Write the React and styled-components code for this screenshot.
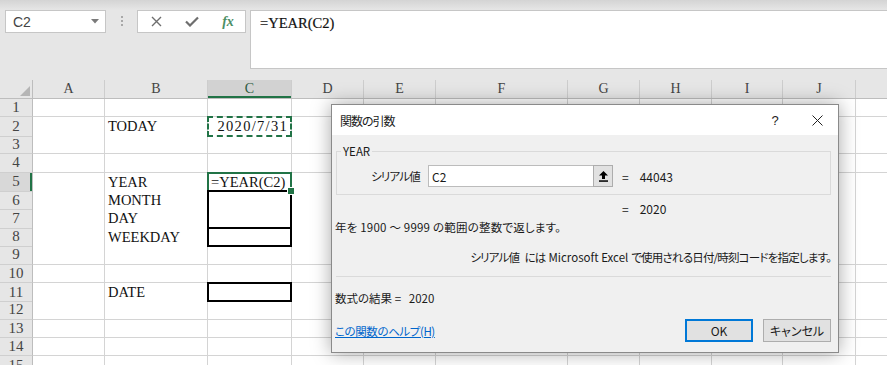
import React from "react";
import styled, { createGlobalStyle, css } from "styled-components";

const GlobalStyle = createGlobalStyle`
  html, body {
    margin: 0;
    padding: 0;
    width: 887px;
    height: 365px;
    overflow: hidden;
    background: #e6e6e6;
  }
  * { box-sizing: border-box; }
`;

const COLS = "33px 72px 103px 84px 72px 72px 132px 72px 72px 71px 73px 72px";
const LETTERS = ["A", "B", "C", "D", "E", "F", "G", "H", "I", "J", ""];
const UI_FONT = `"Noto Sans CJK JP", "Noto Sans", sans-serif`;
const SHEET_FONT = `"Liberation Serif", "Noto Sans CJK JP", serif`;

const Window = styled.div`
  position: relative;
  width: 887px;
  height: 365px;
  overflow: hidden;
  background: #e6e6e6;
`;

const TopStrip = styled.div`
  height: 10px;
  background: linear-gradient(#d4d4d4, #e6e6e6);
`;

const FormulaArea = styled.div`
  display: flex;
  align-items: flex-start;
  height: 70px;
  padding-left: 5px;
`;

const NameBox = styled.div`
  display: flex;
  align-items: center;
  justify-content: space-between;
  width: 101px;
  height: 23px;
  padding: 0 6px 0 7px;
  background: #fff;
  border: 1px solid #c6c6c6;
  font: 14px "Liberation Sans", sans-serif;
  color: #444;
`;

const Grip = styled.div`
  display: flex;
  flex-direction: column;
  gap: 2px;
  margin: 6px 14px 0 15px;
  span {
    width: 2px;
    height: 2px;
    background: #a8a8a8;
  }
`;

const FxButtons = styled.div`
  display: flex;
  width: 109px;
  height: 23px;
  background: #fff;
  border: 1px solid #c6c6c6;
`;

const FxButton = styled.div`
  flex: 0 0 36px;
  display: flex;
  align-items: center;
  justify-content: center;
`;

const FxLabel = styled.span`
  font: italic bold 14px "Liberation Serif", serif;
  color: #4c8f66;
`;

const FormulaInput = styled.div`
  flex: 1;
  height: 59px;
  margin-left: 4px;
  padding: 3px 9px;
  background: #fff;
  border: 1px solid #c6c6c6;
  border-right: none;
  font: 14.5px ${SHEET_FONT};
  line-height: 18px;
  color: #111;
  -webkit-text-stroke: 0.2px #111;
`;

const Sheet = styled.div`
  display: flex;
  flex-direction: column;
`;

const HeaderRow = styled.div`
  display: grid;
  grid-template-columns: ${COLS};
  height: 19px;
  border-bottom: 1px solid #bdbdbd;
`;

const Corner = styled.div`
  position: relative;
  border-right: 1px solid #bdbdbd;
  svg {
    position: absolute;
    right: 2px;
    bottom: 2px;
  }
`;

const ColHead = styled.div`
  display: flex;
  align-items: center;
  justify-content: center;
  border-right: 1px solid #cdcdcd;
  font: 14px ${SHEET_FONT};
  color: #444;
  ${(p) =>
    p.$active &&
    css`
      background: #d2d2d2;
      box-shadow: inset 0 -2px 0 #217346;
      color: #2d5a3f;
    `}
`;

const Row = styled.div`
  display: grid;
  grid-template-columns: ${COLS};
  height: 18.4px;
`;

const RowHead = styled.div`
  display: flex;
  align-items: center;
  justify-content: center;
  border-right: 1px solid #bdbdbd;
  border-bottom: 1px solid #cfcfcf;
  font: 15px ${SHEET_FONT};
  color: #444;
  ${(p) =>
    p.$active &&
    css`
      background: #d8d8d8;
      box-shadow: inset -2px 0 0 #217346;
    `}
`;

const Cell = styled.div`
  position: relative;
  display: flex;
  align-items: center;
  justify-content: ${(p) => (p.$right ? "flex-end" : "flex-start")};
  padding: 0 3px;
  background: #fff;
  border-right: 1px solid #d4d4d4;
  border-bottom: 1px solid #d4d4d4;
  font: 14.5px ${SHEET_FONT};
  line-height: 18.4px;
  color: #111;
  white-space: nowrap;
  letter-spacing: ${(p) => p.$spacing || "0"};

  ${(p) =>
    p.$box &&
    css`
      &::after {
        content: "";
        position: absolute;
        top: -1px;
        left: -1px;
        right: -1px;
        bottom: -1px;
        z-index: 2;
        border-style: ${p.$boxStyle || "solid"};
        border-color: ${p.$boxColor || "#000"};
        border-width: ${p.$box};
        pointer-events: none;
      }
    `}

  ${(p) =>
    p.$handle &&
    css`
      &::before {
        content: "";
        position: absolute;
        right: -4px;
        bottom: -4px;
        width: 6px;
        height: 6px;
        z-index: 3;
        background: #217346;
        border: 1px solid #fff;
      }
    `}
`;

const Dialog = styled.div`
  position: absolute;
  left: 331px;
  top: 104px;
  width: 508px;
  height: 249px;
  display: flex;
  flex-direction: column;
  background: #f0f0f0;
  border: 1px solid #8a8a8a;
  box-shadow: 0 0 18px rgba(0, 0, 0, 0.35);
  font: 11.5px ${UI_FONT};
  font-feature-settings: "palt";
  color: #1a1a1a;
  z-index: 10;
`;

const TitleBar = styled.div`
  display: flex;
  align-items: center;
  height: 30px;
  padding-left: 8px;
  background: #fff;
  font-size: 12px;
`;

const Title = styled.div`
  flex: 1;
  letter-spacing: -1px;
`;

const TitleButton = styled.div`
  display: flex;
  align-items: center;
  justify-content: center;
  width: 42px;
  height: 30px;
  font: 13px "Liberation Sans", sans-serif;
  color: #222;
`;

const Body = styled.div`
  display: flex;
  flex-direction: column;
  padding: 9px 7px 0 3px;
`;

const Group = styled.fieldset`
  margin: 0 0 0 1px;
  padding: 0 0 7px 0;
  border: 1px solid #dadada;
  min-width: 0;
`;

const Legend = styled.legend`
  margin-left: 4px;
  padding: 0 2px;
  line-height: 14px;
`;

const ArgRow = styled.div`
  display: flex;
  align-items: center;
  margin-top: 7px;
`;

const ArgLabel = styled.div`
  width: 83px;
  text-align: right;
  letter-spacing: -0.8px;
`;

const ArgInput = styled.div`
  display: flex;
  align-items: stretch;
  width: 185px;
  height: 22px;
  margin-left: 8px;
  background: #fff;
  border: 1px solid #bcbcbc;
`;

const ArgText = styled.div`
  flex: 1;
  display: flex;
  align-items: center;
  padding-left: 3px;
  font-size: 12px;
`;

const CollapseButton = styled.div`
  display: flex;
  align-items: center;
  justify-content: center;
  width: 20px;
  margin: -1px -1px -1px 0;
  background: #e1e1e1;
  border: 1px solid #adadad;
`;

const Value = styled.div`
  display: flex;
  gap: 11px;
  margin-left: ${(p) => p.$indent || "9px"};
  font-size: 12px;
`;

const Line = styled.div`
  margin-top: ${(p) => p.$top || "0"};
  line-height: 16px;
  text-align: ${(p) => (p.$right ? "right" : "left")};
  letter-spacing: ${(p) => p.$spacing || "0"};
  white-space: nowrap;
`;

const Latin = styled.span`
  letter-spacing: 0;
  margin: 0 3px;
`;

const Separator = styled.div`
  height: 1px;
  margin: 11px 0 0 1px;
  background: #dadada;
`;

const Footer = styled.div`
  display: flex;
  align-items: center;
  gap: 10px;
  margin-top: 13px;
`;

const HelpLink = styled.a`
  flex: 1;
  color: #0066cc;
  text-decoration: underline;
  letter-spacing: -0.4px;
`;

const Button = styled.div`
  display: flex;
  align-items: center;
  justify-content: center;
  width: 68px;
  height: 23px;
  background: #e1e1e1;
  border: ${(p) => (p.$primary ? "2px solid #0078d7" : "1px solid #adadad")};
  font-size: 12px;
`;

const rows = [
  { n: 1 },
  { n: 2, b: "TODAY", c: "2020/7/31", cProps: { $right: true, $spacing: "1.3px", $box: "2px", $boxStyle: "dashed", $boxColor: "#217346" } },
  { n: 3 },
  { n: 4 },
  { n: 5, b: "YEAR", c: "=YEAR(C2)", active: true, cProps: { $box: "2px", $boxColor: "#217346", $handle: true } },
  { n: 6, b: "MONTH", cProps: { $box: "2px 2px 0 2px" } },
  { n: 7, b: "DAY", cProps: { $box: "0 2px 2px 2px" } },
  { n: 8, b: "WEEKDAY", cProps: { $box: "2px" } },
  { n: 9 },
  { n: 10 },
  { n: 11, b: "DATE", cProps: { $box: "2px" } },
  { n: 12 },
  { n: 13 },
  { n: 14 },
  { n: 15 },
];

export default function App() {
  return (
    <Window>
      <GlobalStyle />
      <TopStrip />
      <FormulaArea>
        <NameBox>
          C2
          <svg width="8" height="5" viewBox="0 0 8 5">
            <polygon points="0,0 8,0 4,4.5" fill="#7a7a7a" />
          </svg>
        </NameBox>
        <Grip>
          <span />
          <span />
          <span />
        </Grip>
        <FxButtons>
          <FxButton>
            <svg width="11" height="11" viewBox="0 0 11 11">
              <path d="M1 1 L10 10 M10 1 L1 10" stroke="#6e6e6e" strokeWidth="1.4" />
            </svg>
          </FxButton>
          <FxButton>
            <svg width="14" height="11" viewBox="0 0 14 11">
              <path d="M1 5.5 L5 9.5 L13 1.5" stroke="#6e6e6e" strokeWidth="2.2" fill="none" />
            </svg>
          </FxButton>
          <FxButton>
            <FxLabel>fx</FxLabel>
          </FxButton>
        </FxButtons>
        <FormulaInput>=YEAR(C2)</FormulaInput>
      </FormulaArea>

      <Sheet>
        <HeaderRow>
          <Corner>
            <svg width="10" height="10" viewBox="0 0 10 10">
              <polygon points="10,0 10,10 0,10" fill="#b5b5b5" />
            </svg>
          </Corner>
          {LETTERS.map((l, i) => (
            <ColHead key={i} $active={l === "C"}>
              {l}
            </ColHead>
          ))}
        </HeaderRow>
        {rows.map((r) => (
          <Row key={r.n}>
            <RowHead $active={r.active}>{r.n}</RowHead>
            <Cell />
            <Cell>{r.b}</Cell>
            <Cell {...(r.cProps || {})}>{r.c}</Cell>
            {LETTERS.slice(3).map((l, i) => (
              <Cell key={i} />
            ))}
          </Row>
        ))}
      </Sheet>

      <Dialog>
        <TitleBar>
          <Title>関数の引数</Title>
          <TitleButton>?</TitleButton>
          <TitleButton>
            <svg width="11" height="11" viewBox="0 0 11 11">
              <path d="M0.5 0.5 L10.5 10.5 M10.5 0.5 L0.5 10.5" stroke="#222" strokeWidth="1" />
            </svg>
          </TitleButton>
        </TitleBar>
        <Body>
          <Group>
            <Legend>YEAR</Legend>
            <ArgRow>
              <ArgLabel>シリアル値</ArgLabel>
              <ArgInput>
                <ArgText>C2</ArgText>
                <CollapseButton>
                  <svg width="9" height="11" viewBox="0 0 9 11">
                    <polygon points="4.5,0 9,4.5 6,4.5 6,8 3,8 3,4.5 0,4.5" fill="#000" />
                    <rect x="0" y="9.3" width="9" height="1.5" fill="#000" />
                  </svg>
                </CollapseButton>
              </ArgInput>
              <Value>
                <span>=</span>
                <span>44043</span>
              </Value>
            </ArgRow>
          </Group>
          <Line $top="6px">
            <Value $indent="287px">
              <span>=</span>
              <span>2020</span>
            </Value>
          </Line>
          <Line $top="2px" $spacing="0.2px">年を 1900 ～ 9999 の範囲の整数で返します。</Line>
          <Line $top="14px" $right $spacing="-0.8px">
            シリアル値&nbsp;&nbsp;&nbsp;には<Latin>Microsoft Excel</Latin>で使用される日付/時刻コードを指定します。
          </Line>
          <Separator />
          <Line $top="13px">数式の結果 =&nbsp;&nbsp;&nbsp;2020</Line>
          <Footer>
            <HelpLink href="#">この関数のヘルプ(H)</HelpLink>
            <Button $primary>OK</Button>
            <Button>キャンセル</Button>
          </Footer>
        </Body>
      </Dialog>
    </Window>
  );
}
